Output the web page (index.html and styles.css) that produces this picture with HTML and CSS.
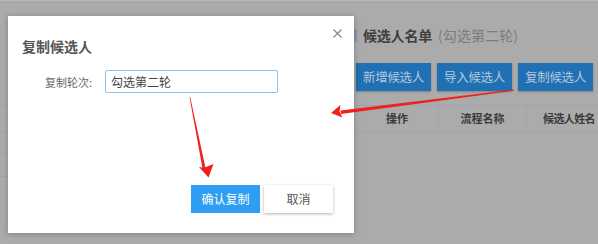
FILE: index.html
```html
<!DOCTYPE html>
<html lang="zh">
<head>
<meta charset="utf-8">
<link rel="stylesheet" href="styles.css">
</head>
<body>
<div class="page">
  <div class="topline"></div>
  <div class="main">
    <div class="side">
      <div class="side-row r1"></div>
      <div class="side-row r2"></div>
      <div class="side-row r3"></div>
      <div class="side-row r4"></div>
    </div>
    <div class="panel">
      <div class="panel-title">
        <span class="bar"></span>
        <span class="ttl">候选人名单</span>
        <span class="sub">(勾选第二轮)</span>
      </div>
      <div class="actions">
        <span class="bg-btn">新增候选人</span>
        <span class="bg-btn">导入候选人</span>
        <span class="bg-btn">复制候选人</span>
      </div>
      <div class="thead">
        <span class="th c1">操作</span>
        <span class="th c2">流程名称</span>
        <span class="th c3">候选人姓名</span>
      </div>
    </div>
  </div>
</div>

<div class="dialog">
  <div class="dlg-head">复制候选人</div>
  <svg class="close" width="9" height="9" viewBox="0 0 9 9"><path d="M0.5 0.5 L8.5 8.5 M8.5 0.5 L0.5 8.5" stroke="#8a8a8a" stroke-width="1.3" fill="none"/></svg>
  <div class="form-row">
    <label class="lbl">复制轮次:</label>
    <div class="input">勾选第二轮</div>
  </div>
  <div class="dlg-foot">
    <span class="btn primary">确认复制</span>
    <span class="btn plain">取消</span>
  </div>
</div>

<svg class="arrows" width="598" height="244" viewBox="0 0 598 244">
  <polygon points="189.5,97 190.2,97 205.5,168 202.5,168.5" fill="#f0201c"/>
  <polygon points="208.5,177.5 199,167 204,167.8 213.5,164" fill="#f0201c"/>
  <polygon points="514,89.5 514.3,90.6 341,114 340.5,110.5" fill="#f0201c"/>
  <polygon points="331,113 340.5,105 339.5,111.5 342.5,117.5" fill="#f0201c"/>
</svg>
</body>
</html>
```
FILE: styles.css
```css
* { box-sizing: border-box; margin: 0; padding: 0; }
html, body { width: 598px; height: 244px; overflow: hidden; }
body {
  background: #ababab;
  font-family: "Noto Sans CJK SC", "Noto Sans", sans-serif;
  position: relative;
}
.page { width: 598px; height: 244px; }
.topline { height: 3px; border-bottom: 1px solid #9d9fb3; background: #b3b3b6; }
.main { display: grid; grid-template-columns: 354px 1fr; }
.side { position: relative; height: 240px; }
.side-row { border-top: 1px solid #9fa1b5; }
.r1 { margin-top: 102px; height: 26px; }
.r2 { height: 22px; }
.r3 { height: 23px; }
.r4 { height: 10px; }

.panel { padding-top: 26px; display: flex; flex-direction: column; min-width: 0; }
.panel-title { display: flex; align-items: center; height: 13px; line-height: 13px; }
.bar { width: 3px; height: 13px; background: #8f92be; margin-right: 6px; }
.ttl { font-size: 14px; font-weight: 700; color: #3e3e3e; letter-spacing: -0.2px; }
.sub { font-size: 14px; color: #7c7c7c; margin-left: 6px; letter-spacing: 0.1px; }

.actions { display: flex; gap: 6px; margin-top: 21px; padding-left: 2px; }
.bg-btn {
  width: 75px; height: 28px; line-height: 28px; text-align: center;
  background: #2170b3; color: #b2c9de; font-size: 12.5px;
  box-shadow: 0 1px 2px rgba(0,0,0,0.25);
  letter-spacing: -0.3px;
}
.thead {
  display: flex; margin-top: 14px; margin-left: 2px;
  border-top: 1px solid #9fa1b5; border-bottom: 1px solid #9fa1b5;
  height: 27px;
}
.th { font-size: 11px; font-weight: 700; color: #3b3b3b; text-align: center; line-height: 25px; flex: none; white-space: nowrap; }
.c1 { width: 83px; border-right: 1px solid #9fa1b5; }
.c2 { width: 88px; border-right: 1px solid #9fa1b5; }
.c3 { width: 71px; text-align: left; padding-left: 16px; letter-spacing: -0.6px; }

.dialog {
  position: absolute; left: 8px; top: 16px; width: 346px; height: 217px;
  background: #fff; display: flex; flex-direction: column;
  box-shadow: 0 1px 6px rgba(0,0,0,0.25);
}
.dlg-head {
  padding: 20px 14px 0; font-size: 14px; line-height: 20px; font-weight: 700; color: #555;
}
.close { position: absolute; left: 325px; top: 13px; }
.form-row { display: flex; align-items: center; margin-top: 14px; }
.lbl { width: 84px; text-align: right; font-size: 11px; color: #666; }
.input {
  margin-left: 13px; width: 173px; height: 23px;
  border: 1px solid #8cc3ee; border-radius: 2px;
  font-size: 12px; line-height: 21px; padding-left: 5px; color: #444;
}
.dlg-foot { margin-top: auto; display: flex; justify-content: flex-end; gap: 4px; padding: 0 21px 20px; }
.btn { width: 69px; height: 28px; line-height: 28px; text-align: center; font-size: 12px; }
.primary { background: #2d9ef2; color: #fff; }
.plain { background: #fff; color: #555; box-shadow: 0 1px 3px rgba(0,0,0,0.3); }

.arrows { position: absolute; left: 0; top: 0; pointer-events: none; }
```
